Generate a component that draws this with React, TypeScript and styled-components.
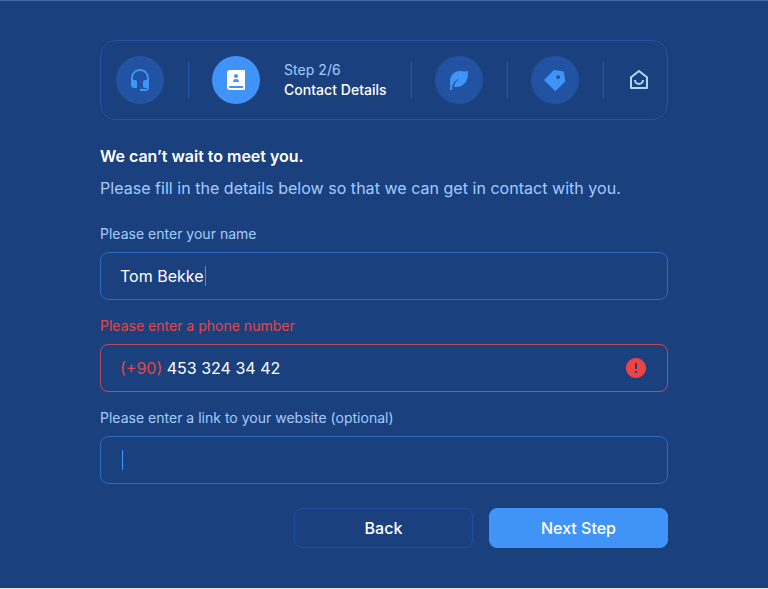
import React from 'react';
import styled, { createGlobalStyle } from 'styled-components';

const GlobalStyle = createGlobalStyle`
  * { box-sizing: border-box; }
  body { margin: 0; background: #dbe5f5; font-family: Inter, sans-serif; }
`;

const Page = styled.main`
  height: 588px;
  padding: 39px 100px 0;
  border-top: 1px solid #3f6cad;
  background: #1a407e;
`;

const Stepper = styled.nav`
  display: flex;
  align-items: center;
  height: 80px;
  padding: 0 15px;
  border: 1px solid #2353a2;
  border-radius: 16px;
`;

const StepBadge = styled.div<{ $active?: boolean }>`
  display: grid;
  place-items: center;
  width: 48px;
  height: 48px;
  border-radius: 50%;
  color: ${(p) => (p.$active ? '#ffffff' : '#4094f7')};
  background: ${(p) => (p.$active ? '#4094f7' : '#2253a2')};
`;

const Divider = styled.span`
  width: 1px;
  height: 36px;
  margin: 0 23px 0 24px;
  background: #2256a7;
`;

const StepText = styled.div`
  width: 103px;
  margin-left: 24px;
  font-size: 14px;
  line-height: 20px;
  white-space: nowrap;
`;

const StepCount = styled.div`
  color: #a4cdfe;
  letter-spacing: 0.05px;
`;

const StepName = styled.div`
  color: #ffffff;
  font-weight: 500;
  letter-spacing: 0.03px;
`;

const HomeStep = styled.div`
  display: flex;
  color: #b0d5ff;
`;

const Icon = styled.svg`
  display: block;
  width: 24px;
  height: 24px;
  fill: currentColor;
`;

const Title = styled.h1`
  margin: 24px 0 0;
  color: #ffffff;
  font-size: 16px;
  font-weight: 600;
  line-height: 25px;
  letter-spacing: -0.02px;
`;

const Intro = styled.p`
  margin: 7px 0 0;
  color: #a4cdfe;
  font-size: 16px;
  line-height: 24px;
  letter-spacing: 0.03px;
  white-space: nowrap;
`;

const Field = styled.div<{ $first?: boolean }>`
  margin-top: ${(p) => (p.$first ? 24 : 16)}px;
`;

const Label = styled.div<{ $error?: boolean }>`
  color: ${(p) => (p.$error ? '#e54545' : '#a4cdfe')};
  font-size: 14px;
  line-height: 20px;
  letter-spacing: 0.01px;
`;

const InputBox = styled.div<{ $error?: boolean }>`
  display: flex;
  align-items: center;
  height: 48px;
  margin-top: 8px;
  padding: 0 19px;
  border: 1px solid ${(p) => (p.$error ? '#bd4860' : '#3069bf')};
  border-radius: 8px;
  color: #ffffff;
  font-size: 16px;
`;

const Prefix = styled.span`
  margin-right: 4.5px;
  color: #e54545;
`;

const Caret = styled.span`
  width: 1px;
  height: 20px;
  margin-left: 1.5px;
  background: #4094f7;
`;

const ErrorIcon = styled(Icon)`
  margin-left: auto;
  color: #ef4444;
`;

const Actions = styled.div`
  display: flex;
  justify-content: flex-end;
  gap: 16px;
  margin-top: 24px;
`;

const Button = styled.button<{ $primary?: boolean }>`
  width: 179px;
  height: 40px;
  padding: 0;
  border: 1px solid ${(p) => (p.$primary ? '#4094f7' : '#224f9b')};
  border-radius: 8px;
  background: ${(p) => (p.$primary ? '#4094f7' : 'transparent')};
  color: #ffffff;
  font: 500 16px/24px Inter, sans-serif;
`;

const icons = {
  headset:
    'M12 1c-4.97 0-9 4.03-9 9v7c0 1.66 1.34 3 3 3h3v-6a2 2 0 0 0-2-2H5v-2c0-3.87 3.13-7 7-7s7 3.13 7 7v2h-2a2 2 0 0 0-2 2v4a2 2 0 0 0 2 2h2v1h-7v2h6c1.66 0 3-1.34 3-3V10c0-4.97-4.03-9-9-9z',
  contacts:
    'M20 22H6a3 3 0 0 1-3-3V5a3 3 0 0 1 3-3h14a1 1 0 0 1 1 1v18a1 1 0 0 1-1 1zm-1-2v-2H6a1 1 0 0 0 0 2h13zm-7-10a2 2 0 1 0 0-4 2 2 0 0 0 0 4zm-3 4h6a3 3 0 0 0-6 0z',
  leaf:
    'M20.998 3v2c0 9.627-5.373 14-12 14H7.096c.212-3.012 1.15-4.835 3.598-7.001 1.204-1.065 1.102-1.68.509-1.327-4.084 2.43-6.112 5.714-6.202 10.958L4.998 22h-2c0-1.363.116-2.6.346-3.732C3.116 16.974 2.998 15.218 2.998 13c0-5.523 4.477-10 10-10 2 0 4 1 8 0z',
  tag:
    'M10.9 2.1l9.899 1.415 1.414 9.9-9.192 9.192a1 1 0 0 1-1.414 0l-9.9-9.9a1 1 0 0 1 0-1.414L10.9 2.1zm2.828 8.486a2 2 0 1 0 2.828-2.829 2 2 0 0 0-2.828 2.829z',
  home:
    'M19 19V9.799l-7-5.522-7 5.522V19h14zm2 1a1 1 0 0 1-1 1H4a1 1 0 0 1-1-1V9.314a1 1 0 0 1 .38-.785l8-6.311a1 1 0 0 1 1.24 0l8 6.31a1 1 0 0 1 .38.786V20zM7 12h2a3 3 0 0 0 6 0h2a5 5 0 0 1-10 0z',
  alert:
    'M12 22C6.477 22 2 17.523 2 12S6.477 2 12 2s10 4.477 10 10-4.477 10-10 10zm-1-7v2h2v-2h-2zm0-8v6h2V7h-2z',
};

const Glyph = ({ name }: { name: keyof typeof icons }) => (
  <Icon viewBox="0 0 24 24" aria-hidden="true">
    <path d={icons[name]} />
  </Icon>
);

export default function App() {
  return (
    <>
      <GlobalStyle />
      <Page>
        <Stepper>
          <StepBadge><Glyph name="headset" /></StepBadge>
          <Divider />
          <StepBadge $active><Glyph name="contacts" /></StepBadge>
          <StepText>
            <StepCount>Step 2/6</StepCount>
            <StepName>Contact Details</StepName>
          </StepText>
          <Divider />
          <StepBadge><Glyph name="leaf" /></StepBadge>
          <Divider />
          <StepBadge><Glyph name="tag" /></StepBadge>
          <Divider />
          <HomeStep><Glyph name="home" /></HomeStep>
        </Stepper>

        <Title>We can’t wait to meet you.</Title>
        <Intro>Please fill in the details below so that we can get in contact with you.</Intro>

        <Field $first>
          <Label>Please enter your name</Label>
          <InputBox>Tom Bekke<Caret /></InputBox>
        </Field>
        <Field>
          <Label $error>Please enter a phone number</Label>
          <InputBox $error>
            <Prefix>(+90)</Prefix>
            453 324 34 42
            <ErrorIcon viewBox="0 0 24 24" aria-hidden="true">
              <path d={icons.alert} />
            </ErrorIcon>
          </InputBox>
        </Field>
        <Field>
          <Label>Please enter a link to your website (optional)</Label>
          <InputBox><Caret /></InputBox>
        </Field>

        <Actions>
          <Button type="button">Back</Button>
          <Button type="button" $primary>Next Step</Button>
        </Actions>
      </Page>
    </>
  );
}
